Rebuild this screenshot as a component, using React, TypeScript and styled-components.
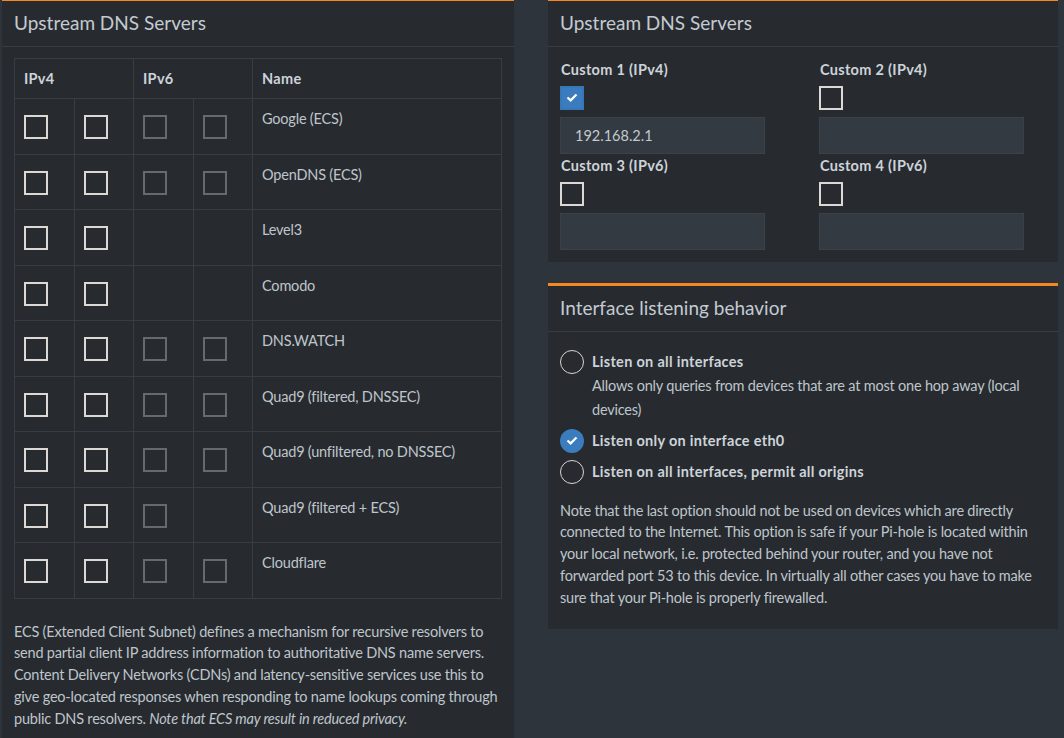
import React from "react";
import styled, { createGlobalStyle } from "styled-components";

const GlobalStyle = createGlobalStyle`
  * {
    box-sizing: border-box;
  }
  body {
    margin: 0;
    background: #2e343b;
    color: #bfc5cb;
    font-family: "Source Sans Pro", Lato, "Noto Sans", sans-serif;
    font-size: 14.5px;
    letter-spacing: -0.2px;
    line-height: 21.75px;
  }
`;

const Page = styled.div`
  display: grid;
  grid-template-columns: 512px 510px;
  column-gap: 34px;
  align-items: start;
  padding-left: 2px;
  margin-top: -2px;
`;

const Column = styled.div`
  display: flex;
  flex-direction: column;
  gap: 21px;
`;

const Box = styled.section`
  background: #272b30;
  border-top: 3px solid #f5871f;
`;

const BoxHeader = styled.div`
  padding: 8px 12px 10px;
  border-bottom: 1px solid #383d44;
`;

const BoxTitle = styled.h3`
  margin: 0;
  font-size: 19px;
  font-weight: 400;
  line-height: 27px;
  color: #c3cad0;
  letter-spacing: 0;
`;

const BoxBody = styled.div<{ $pt?: number; $pb?: number }>`
  padding: ${(p) => p.$pt ?? 11}px 12px ${(p) => p.$pb ?? 12}px;
`;

const Table = styled.table`
  width: 100%;
  border-collapse: collapse;
  table-layout: fixed;
  border: 1px solid #383d43;
  margin-bottom: 22px;
`;

const HeadCell = styled.th`
  text-align: left;
  padding: 9px;
  line-height: 21px;
  font-weight: 700;
  letter-spacing: 0.3px;
  color: #cdd3d9;
  border: 1px solid #383d43;
`;

const Cell = styled.td`
  padding: 9px;
  vertical-align: top;
  border: 1px solid #383d43;
`;

const BoxSlot = styled.div`
  margin: 7px 0 5.5px;
  height: 24px;
`;

const CheckBox = styled.span<{ $checked?: boolean; $disabled?: boolean }>`
  display: flex;
  align-items: center;
  justify-content: center;
  width: 24px;
  height: 24px;
  border: 2px solid
    ${(p) => (p.$checked ? "#3677b8" : p.$disabled ? "#666a6e" : "#dcd8d3")};
  background: ${(p) => (p.$checked ? "#3a7cbd" : "transparent")};
`;

const Radio = styled.span<{ $checked?: boolean }>`
  flex: none;
  display: flex;
  align-items: center;
  justify-content: center;
  width: 24px;
  height: 24px;
  border-radius: 50%;
  border: ${(p) => (p.$checked ? "none" : "1.5px solid #d8d4cf")};
  background: ${(p) => (p.$checked ? "#3a7cbd" : "transparent")};
`;

const Note = styled.p`
  margin: 0;
`;

const FieldGrid = styled.div`
  display: grid;
  grid-template-columns: 205px 205px;
  column-gap: 54px;
  row-gap: 1px;
`;

const Field = styled.div`
  display: flex;
  flex-direction: column;
`;

const FieldLabel = styled.label`
  font-weight: 700;
  letter-spacing: 0.3px;
  color: #cdd3d9;
  padding-left: 1px;
  margin-bottom: 5px;
`;

const Input = styled.input`
  margin-top: 7px;
  width: 205px;
  height: 37px;
  background: #343a41;
  border: 1px solid #3b4148;
  color: #c3c9cf;
  font: inherit;
  padding: 0 14px;
  outline: none;
`;

const OptionList = styled.div`
  display: flex;
  flex-direction: column;
  gap: 7px;
  margin-bottom: 16px;
`;

const Option = styled.div`
  display: flex;
  align-items: flex-start;
  gap: 8px;
`;

const OptionText = styled.div`
  line-height: 24px;
`;

const OptionLabel = styled.div`
  font-weight: 700;
  letter-spacing: 0.3px;
  color: #cdd3d9;
`;

const Check = ({ size = 12 }: { size?: number }) => (
  <svg width={size} height={size * 0.75} viewBox="0 0 12 9">
    <polyline
      points="1.5,4.5 4.6,7.4 10.5,1.5"
      fill="none"
      stroke="#fff"
      strokeWidth="2.2"
    />
  </svg>
);

type Server = { name: string; v6: number };

const servers: Server[] = [
  { name: "Google (ECS)", v6: 2 },
  { name: "OpenDNS (ECS)", v6: 2 },
  { name: "Level3", v6: 0 },
  { name: "Comodo", v6: 0 },
  { name: "DNS.WATCH", v6: 2 },
  { name: "Quad9 (filtered, DNSSEC)", v6: 2 },
  { name: "Quad9 (unfiltered, no DNSSEC)", v6: 2 },
  { name: "Quad9 (filtered + ECS)", v6: 1 },
  { name: "Cloudflare", v6: 2 },
];

const customs = [
  { label: "Custom 1 (IPv4)", checked: true, value: "192.168.2.1" },
  { label: "Custom 2 (IPv4)", checked: false, value: "" },
  { label: "Custom 3 (IPv6)", checked: false, value: "" },
  { label: "Custom 4 (IPv6)", checked: false, value: "" },
];

const App = () => {
  return (
    <>
      <GlobalStyle />
      <Page>
        <Box>
          <BoxHeader>
            <BoxTitle>Upstream DNS Servers</BoxTitle>
          </BoxHeader>
          <BoxBody>
            <Table>
              <colgroup>
                <col style={{ width: 60 }} />
                <col style={{ width: 59 }} />
                <col style={{ width: 60 }} />
                <col style={{ width: 59 }} />
                <col />
              </colgroup>
              <thead>
                <tr>
                  <HeadCell colSpan={2}>IPv4</HeadCell>
                  <HeadCell colSpan={2}>IPv6</HeadCell>
                  <HeadCell>Name</HeadCell>
                </tr>
              </thead>
              <tbody>
                {servers.map((s) => (
                  <tr key={s.name}>
                    {[0, 1].map((i) => (
                      <Cell key={"a" + i}>
                        <BoxSlot>
                          <CheckBox />
                        </BoxSlot>
                      </Cell>
                    ))}
                    {[0, 1].map((i) => (
                      <Cell key={"b" + i}>
                        <BoxSlot>{i < s.v6 && <CheckBox $disabled />}</BoxSlot>
                      </Cell>
                    ))}
                    <Cell>{s.name}</Cell>
                  </tr>
                ))}
              </tbody>
            </Table>
            <Note>
              ECS (Extended Client Subnet) defines a mechanism for recursive
              resolvers to send partial client IP address information to
              authoritative DNS name servers. Content Delivery Networks (CDNs)
              and latency-sensitive services use this to give geo-located
              responses when responding to name lookups coming through public
              DNS resolvers. <em>Note that ECS may result in reduced privacy.</em>
            </Note>
          </BoxBody>
        </Box>
        <Column>
          <Box>
            <BoxHeader>
              <BoxTitle>Upstream DNS Servers</BoxTitle>
            </BoxHeader>
            <BoxBody $pt={12}>
              <FieldGrid>
                {customs.map((c) => (
                  <Field key={c.label}>
                    <FieldLabel>{c.label}</FieldLabel>
                    <CheckBox $checked={c.checked}>
                      {c.checked && <Check />}
                    </CheckBox>
                    <Input defaultValue={c.value} />
                  </Field>
                ))}
              </FieldGrid>
            </BoxBody>
          </Box>
          <Box>
            <BoxHeader>
              <BoxTitle>Interface listening behavior</BoxTitle>
            </BoxHeader>
            <BoxBody $pt={18} $pb={21}>
              <OptionList>
                <Option>
                  <Radio />
                  <OptionText>
                    <OptionLabel>Listen on all interfaces</OptionLabel>
                    Allows only queries from devices that are at most one hop
                    away (local devices)
                  </OptionText>
                </Option>
                <Option>
                  <Radio $checked>
                    <Check />
                  </Radio>
                  <OptionText>
                    <OptionLabel>Listen only on interface eth0</OptionLabel>
                  </OptionText>
                </Option>
                <Option>
                  <Radio />
                  <OptionText>
                    <OptionLabel>
                      Listen on all interfaces, permit all origins
                    </OptionLabel>
                  </OptionText>
                </Option>
              </OptionList>
              <Note>
                Note that the last option should not be used on devices which
                are directly connected to the Internet. This option is safe if
                your Pi-hole is located within your local network, i.e.
                protected behind your router, and you have not forwarded port
                53 to this device. In virtually all other cases you have to
                make sure that your Pi-hole is properly firewalled.
              </Note>
            </BoxBody>
          </Box>
        </Column>
      </Page>
    </>
  );
};

export default App;
